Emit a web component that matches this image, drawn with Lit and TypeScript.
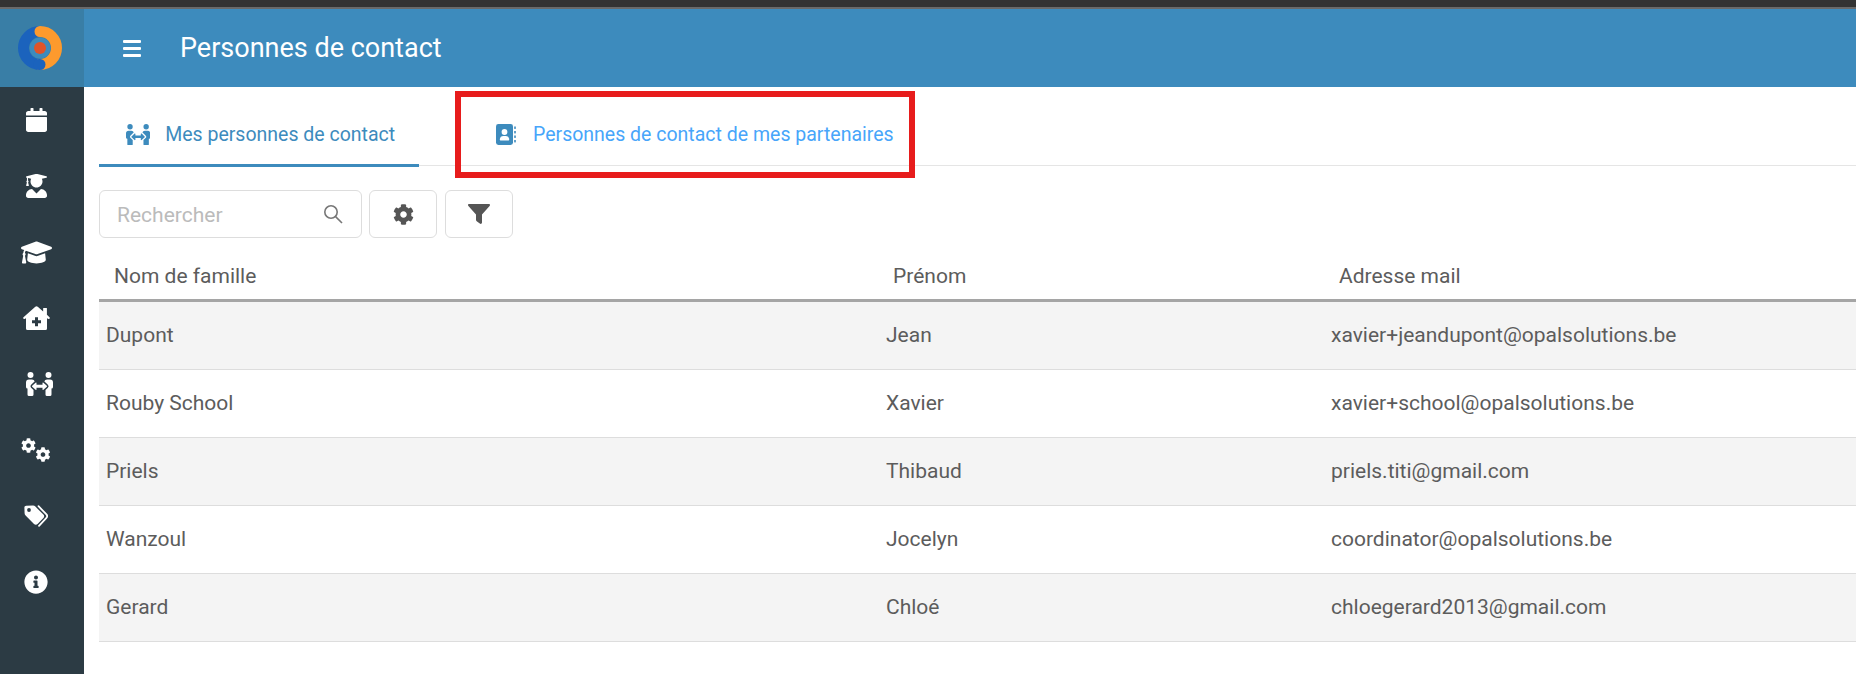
import { LitElement, html, css, svg } from "lit";
import { customElement } from "lit/decorators.js";

const P = {
  calendar: [448, "M12 192h424c6.6 0 12 5.4 12 12v260c0 26.5-21.5 48-48 48H48c-26.5 0-48-21.5-48-48V204c0-6.6 5.4-12 12-12zm436-44v-36c0-26.5-21.5-48-48-48h-48V12c0-6.6-5.4-12-12-12h-40c-6.6 0-12 5.4-12 12v52H160V12c0-6.6-5.4-12-12-12h-40c-6.6 0-12 5.4-12 12v52H48C21.5 64 0 85.5 0 112v36c0 6.6 5.4 12 12 12h424c6.6 0 12-5.4 12-12z"],
  user: [448, "M319.4 320.6L224 416l-95.4-95.4C57.1 323.7 0 382.2 0 454.4v9.6c0 26.5 21.5 48 48 48h352c26.5 0 48-21.5 48-48v-9.6c0-72.2-57.1-130.7-128.6-133.8zM13.6 79.8l6.4 1.5v58.4c-7 4.2-12 11.5-12 20.3 0 8.4 4.6 15.4 11.1 19.7L3.5 242c-1.7 6.9 2.1 14 7.6 14h41.8c5.5 0 9.3-7.1 7.6-14l-15.6-62.3C51.4 175.4 56 168.4 56 160c0-8.8-5-16.1-12-20.3V87.1l66 15.9c-8.6 17.2-14 36.4-14 57 0 70.7 57.3 128 128 128s128-57.3 128-128c0-20.6-5.3-39.8-14-57l96.3-23.2c18.2-4.4 18.2-27.1 0-31.5l-190.4-46c-13-3.1-26.7-3.1-39.7 0L13.6 48.2c-18.1 4.4-18.1 27.2 0 31.6z"],
  cap: [640, "M622.34 153.2L343.4 67.5c-15.2-4.67-31.6-4.67-46.79 0L17.66 153.2c-23.54 7.23-23.54 38.36 0 45.59l48.63 14.94c-10.67 13.19-17.23 29.28-17.88 46.9C38.78 266.15 32 276.11 32 288c0 10.78 5.68 19.85 13.86 25.65L20.33 428.53C18.11 438.52 25.71 448 35.94 448h56.11c10.24 0 17.84-9.48 15.62-19.47L82.14 313.65C90.32 307.85 96 298.78 96 288c0-11.57-6.47-21.25-15.66-26.87.76-15.02 8.44-28.3 20.69-36.72L296.6 284.5c9.06 2.78 26.44 6.25 46.79 0l278.95-85.7c23.55-7.24 23.55-38.36 0-45.6zM352.79 315.09c-28.53 8.76-52.84 3.92-65.59 0l-145.02-44.55L128 384c0 35.35 85.96 64 192 64s192-28.65 192-64l-14.18-113.47-145.03 44.56z"],
  clinic: [576, "M262 18a40 40 0 0 1 52 0L430 118V48a8 8 0 0 1 8-8h64a8 8 0 0 1 8 8V188L560 232a24 24 0 0 1-26 42L512 262V480a32 32 0 0 1-32 32H96a32 32 0 0 1-32-32V262L42 274a24 24 0 0 1-26-42ZM256 240v64h-64v64h64v64h64v-64h64v-64h-64v-64Z"],
  people: [576, "M96,128A64,64,0,1,0,32,64,64,64,0,0,0,96,128Zm0,176.08a44.11,44.11,0,0,1,13.64-32L181.77,204c1.65-1.55,3.77-2.31,5.61-3.57A63.91,63.91,0,0,0,128,160H64A64,64,0,0,0,0,224V320a32,32,0,0,0,32,32V480a32,32,0,0,0,32,32h64a32,32,0,0,0,32-32V383.61l-50.36-47.53A44.08,44.08,0,0,1,96,304.08ZM480,128a64,64,0,1,0-64-64A64,64,0,0,0,480,128Zm32,32H448a63.91,63.91,0,0,0-59.38,40.42c1.84,1.27,4,2,5.62,3.59l72.12,68.06a44.37,44.37,0,0,1,0,64L416,383.62V480a32,32,0,0,0,32,32h64a32,32,0,0,0,32-32V352a32,32,0,0,0,32-32V224A64,64,0,0,0,512,160ZM444.4,295.34l-72.12-68.06A12,12,0,0,0,352,236v36H224V236a12,12,0,0,0-20.28-8.73L131.6,295.34a12.4,12.4,0,0,0,0,17.47l72.12,68.07A12,12,0,0,0,224,372.14V336H352v36.14a12,12,0,0,0,20.28,8.74l72.12-68.07A12.4,12.4,0,0,0,444.4,295.34Z"],
  cog: [512, "M487.4 315.7l-42.6-24.6c4.3-23.2 4.3-47 0-70.2l42.6-24.6c4.9-2.8 7.1-8.6 5.5-14-11.1-35.6-30-67.8-54.7-94.6-3.8-4.1-10-5.1-14.8-2.3L380.8 110c-17.9-15.4-38.5-27.3-60.8-35.1V25.8c0-5.6-3.9-10.5-9.4-11.7-36.7-8.2-74.3-7.8-109.2 0-5.5 1.2-9.4 6.1-9.4 11.7V75c-22.2 7.9-42.8 19.8-60.8 35.1L88.7 85.5c-4.9-2.8-11-1.9-14.8 2.3-24.7 26.7-43.6 58.9-54.7 94.6-1.7 5.4.6 11.2 5.5 14L67.3 221c-4.3 23.2-4.3 47 0 70.2l-42.6 24.6c-4.9 2.8-7.1 8.6-5.5 14 11.1 35.6 30 67.8 54.7 94.6 3.8 4.1 10 5.1 14.8 2.3l42.6-24.6c17.9 15.4 38.5 27.3 60.8 35.1v49.2c0 5.6 3.9 10.5 9.4 11.7 36.7 8.2 74.3 7.8 109.2 0 5.5-1.2 9.4-6.1 9.4-11.7v-49.2c22.2-7.9 42.8-19.8 60.8-35.1l42.6 24.6c4.9 2.8 11 1.9 14.8-2.3 24.7-26.7 43.6-58.9 54.7-94.6 1.5-5.5-.7-11.3-5.6-14.1zM256 336c-44.1 0-80-35.9-80-80s35.9-80 80-80 80 35.9 80 80-35.9 80-80 80z"],
  info: [512, "M256 8C119.043 8 8 119.083 8 256c0 136.997 111.043 248 248 248s248-111.003 248-248C504 119.083 392.957 8 256 8zm0 110c23.196 0 42 18.804 42 42s-18.804 42-42 42-42-18.804-42-42 18.804-42 42-42zm56 254c0 6.627-5.373 12-12 12h-88c-6.627 0-12-5.373-12-12v-24c0-6.627 5.373-12 12-12h12v-64h-12c-6.627 0-12-5.373-12-12v-24c0-6.627 5.373-12 12-12h64c6.627 0 12 5.373 12 12v100h12c6.627 0 12 5.373 12 12v24z"],
} as const;

const icon = (k: keyof typeof P, h: number) => {
  const [w, d] = P[k];
  return html`<svg width=${(h * w) / 512} height=${h} viewBox="0 0 ${w} 512" fill="currentColor"><path d=${d}></path></svg>`;
};

const capIcon = html`<svg width="31" height="29" viewBox="0 0 640 512" preserveAspectRatio="none" fill="currentColor"><path d=${P.cap[1]}></path></svg>`;

const cogs = html`<svg width="30" height="24" viewBox="0 0 30 24" fill="currentColor">
  <svg x="0" y="0" width="15" height="15" viewBox="0 0 512 512"><path d=${P.cog[1]}></path></svg>
  <svg x="14" y="9" width="16" height="15" viewBox="0 0 512 512"><path d=${P.cog[1]}></path></svg>
</svg>`;

const tags = html`<svg width="24" height="22" viewBox="0 0 24 22">
  <path d="M2.2 .8L9 .6C10 .6 10.8 1 11.4 1.6L19.4 9.6C20.4 10.6 20.4 12 19.4 13L13.6 18.9C12.6 19.9 11 19.9 10 18.9L1.6 10.4C1 9.8 .6 9 .6 8.2L.4 2.6C.4 1.6 1.2 .8 2.2 .8Z" fill="currentColor"></path>
  <circle cx="5" cy="5" r="1.9" fill="#2c3b44"></circle>
  <path d="M14.5 1.2L22.2 9.2C23.4 10.4 23.4 12 22.2 13.2L15 20.8" fill="none" stroke="currentColor" stroke-width="1.8" stroke-linecap="round"></path>
</svg>`;

const filterIcon = html`<svg width="22" height="20" viewBox="0 0 22 20" fill="currentColor">
  <path d="M1 0H21C22 0 22.3 1.2 21.6 2L14 10.5V18.5C14 19.7 12.8 20.3 11.8 19.6L9 17.6C8.4 17.2 8 16.6 8 16V10.5L.4 2C-.3 1.2 0 0 1 0Z"></path>
</svg>`;

const bookIcon = html`<svg width="20" height="21" viewBox="0 0 20 21" fill="#3d8bbd">
  <rect x="0" y="0" width="17" height="21" rx="2.4"></rect>
  <circle cx="8.5" cy="8" r="2.9" fill="#fff"></circle>
  <path d="M3.8 15.4C3.8 13.2 5.6 12 7.2 12H9.8C11.4 12 13.2 13.2 13.2 15.4C13.2 16 12.8 16.4 12.2 16.4H4.8C4.2 16.4 3.8 16 3.8 15.4Z" fill="#fff"></path>
  <rect x="18.2" y="2.5" width="1.6" height="2.4"></rect>
  <rect x="18.2" y="7" width="1.6" height="2.4"></rect>
  <rect x="18.2" y="11.5" width="1.6" height="2.4"></rect>
  <rect x="18.2" y="16" width="1.6" height="2.4"></rect>
</svg>`;

const logo = html`<svg width="46" height="46" viewBox="0 0 46 46" fill="none">
  ${svg`<path d="M23 6.5A16.5 16.5 0 0 0 23 39.5" stroke="#1b63bd" stroke-width="11"></path>
  <path d="M23 6.5A16.5 16.5 0 0 1 23 39.5" stroke="#fd9a2d" stroke-width="11" stroke-linecap="round"></path>
  <path d="M22 39.5H23" stroke="#1b63bd" stroke-width="11" stroke-linecap="round"></path>
  <circle cx="23" cy="23" r="10.5" fill="#3d8bbd"></circle>
  <circle cx="23" cy="23" r="6" fill="#e0542a"></circle>`}
</svg>`;

const ROWS = [
  ["Dupont", "Jean", "xavier+jeandupont@opalsolutions.be"],
  ["Rouby School", "Xavier", "xavier+school@opalsolutions.be"],
  ["Priels", "Thibaud", "priels.titi@gmail.com"],
  ["Wanzoul", "Jocelyn", "coordinator@opalsolutions.be"],
  ["Gerard", "Chloé", "chloegerard2013@gmail.com"],
];

@customElement("app-root")
export class AppRoot extends LitElement {
  static styles = css`
    :host { display: block; height: 674px; overflow: hidden; font-family: Roboto, sans-serif; color: #5c5c5c; background: #fff; position: relative; }
    .chrome { height: 9px; box-sizing: border-box; background: #333; border-bottom: 2px solid #6a6a6a; }
    .shell { display: grid; grid-template-columns: 84px 1fr; height: 665px; }
    .side { background: #2c3b44; color: #fff; display: flex; flex-direction: column; }
    .logo { height: 78px; background: #397ea6; display: flex; align-items: center; justify-content: center; padding-right: 5px; box-sizing: border-box; }
    .nav { height: 66px; display: flex; align-items: center; justify-content: center; padding-right: 12px; box-sizing: border-box; }
    .nav.people { padding-right: 6px; }
    .main { display: flex; flex-direction: column; min-width: 0; }
    .top { height: 78px; background: #3d8bbd; color: #fff; display: flex; align-items: center; padding-left: 39px; gap: 39px; font-size: 27px; }
    .burger { width: 18px; display: flex; flex-direction: column; gap: 4px; }
    .burger i { display: block; height: 3px; background: #fff; border-radius: 1px; }
    .content { padding: 0 0 0 15px; }
    .tabs { display: flex; height: 79px; border-bottom: 1px solid #e5e5e5; box-sizing: border-box; }
    .tab { display: flex; align-items: center; font-size: 19.5px; box-sizing: border-box; height: 80px; }
    .tab.on { width: 320px; padding: 18px 0 0 27px; gap: 15px; color: #3d8bbd; border-bottom: 3px solid #3d8bbd; }
    .tab.off { margin-left: 77px; padding-top: 15px; color: #47a5fa; gap: 17px; height: 79px; }
    .tools { display: flex; gap: 7px; margin-top: 24px; align-items: stretch; }
    .search { width: 263px; height: 48px; box-sizing: border-box; border: 1px solid #ddd; border-radius: 6px; display: flex; align-items: center; justify-content: space-between; padding: 0 18px 0 17px; font-size: 21px; color: #bbb; }
    .search span { padding-top: 2px; }
    .search svg { color: #777; }
    .btn { width: 68px; height: 48px; box-sizing: border-box; border: 1px solid #ddd; border-radius: 6px; display: flex; align-items: center; justify-content: center; color: #555; }
    .btn + .btn { margin-left: 1px; }
    .row { display: grid; grid-template-columns: 780px 445px 1fr; font-size: 21px; align-items: center; }
    .head { height: 64px; border-bottom: 3px solid #a5a5a5; box-sizing: border-box; padding-top: 14px; }
    .head span { padding-left: 15px; }
    .head span:nth-child(2) { padding-left: 14px; }
    .body { height: 68px; box-sizing: border-box; border-bottom: 1px solid #ddd; padding-bottom: 1px; }
    .body span { padding-left: 7px; }
    .body:nth-child(odd) { background: #f4f4f4; }
    .mark { position: absolute; left: 455px; top: 91px; width: 460px; height: 87px; box-sizing: border-box; border: 6px solid #e71c1c; pointer-events: none; }
  `;
  render() {
    return html`
      <div class="chrome"></div>
      <div class="shell">
        <aside class="side">
          <div class="logo">${logo}</div>
          <div class="nav">${icon("calendar", 24)}</div>
          <div class="nav">${icon("user", 24)}</div>
          <div class="nav">${capIcon}</div>
          <div class="nav">${icon("clinic", 24)}</div>
          <div class="nav people">${icon("people", 24)}</div>
          <div class="nav">${cogs}</div>
          <div class="nav">${tags}</div>
          <div class="nav">${icon("info", 24)}</div>
        </aside>
        <div class="main">
          <header class="top">
            <div class="burger"><i></i><i></i><i></i></div>
            <div>Personnes de contact</div>
          </header>
          <div class="content">
            <div class="tabs">
              <div class="tab on">${icon("people", 21.5)}<span>Mes personnes de contact</span></div>
              <div class="tab off">${bookIcon}<span>Personnes de contact de mes partenaires</span></div>
            </div>
            <div class="tools">
              <div class="search"><span>Rechercher</span>
                <svg width="20" height="20" viewBox="0 0 20 20" fill="none" stroke="currentColor" stroke-width="1.6"><circle cx="8" cy="8" r="6.2"></circle><path d="M12.6 12.6L19 19"></path></svg>
              </div>
              <div class="btn">${icon("cog", 21)}</div>
              <div class="btn">${filterIcon}</div>
            </div>
            <div class="row head"><span>Nom de famille</span><span>Prénom</span><span>Adresse mail</span></div>
            <div>
              ${ROWS.map((r) => html`<div class="row body">${r.map((c) => html`<span>${c}</span>`)}</div>`)}
            </div>
          </div>
        </div>
      </div>
      <div class="mark"></div>
    `;
  }
}
